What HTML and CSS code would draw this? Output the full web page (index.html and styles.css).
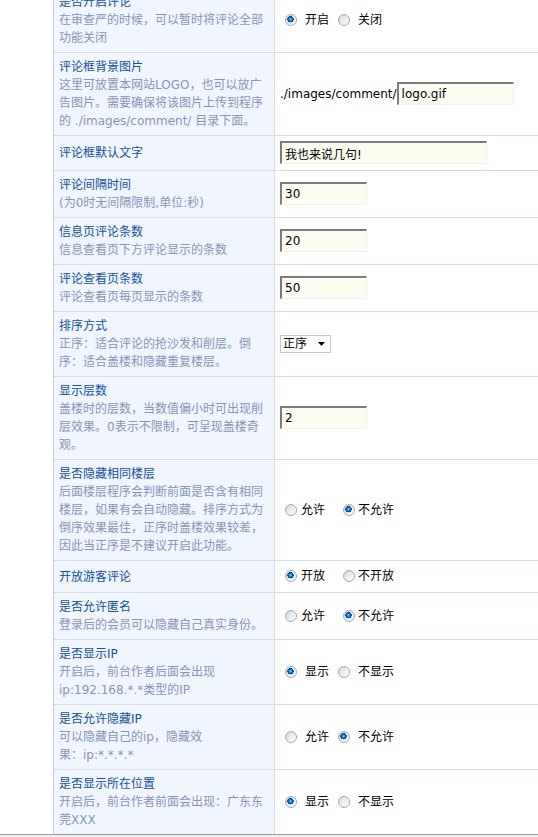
FILE: index.html
```html
<!DOCTYPE html>
<html lang="zh-CN">
<head>
<meta charset="utf-8">
<title>评论设置</title>
<link rel="stylesheet" href="styles.css">
</head>
<body>
<div class="page">
  <table class="cfg">
    <colgroup><col class="c1"><col class="c2"></colgroup>
    <tr>
      <td class="lbl"><div class="t">是否开启评论</div><div class="d">在审查严的时候，可以暂时将评论全部功能关闭</div></td>
      <td class="val"><div class="opts a">
        <label class="opt"><input type="radio" class="rd" name="r1" checked><span>开启</span></label>
        <label class="opt"><input type="radio" class="rd" name="r1"><span>关闭</span></label>
      </div></td>
    </tr>
    <tr>
      <td class="lbl"><div class="t">评论框背景图片</div><div class="d">这里可放置本网站LOGO，也可以放广告图片。需要确保将该图片上传到程序的 ./images/comment/ 目录下面。</div></td>
      <td class="val"><div class="line"><span class="path">./images/comment/</span><input class="txt w-logo" value="logo.gif"></div></td>
    </tr>
    <tr>
      <td class="lbl"><div class="t">评论框默认文字</div></td>
      <td class="val"><div class="line"><input class="txt w-long" value="我也来说几句!"></div></td>
    </tr>
    <tr>
      <td class="lbl"><div class="t">评论间隔时间</div><div class="d">(为0时无间隔限制,单位:秒)</div></td>
      <td class="val"><div class="line"><input class="txt w-num" value="30"></div></td>
    </tr>
    <tr>
      <td class="lbl"><div class="t">信息页评论条数</div><div class="d">信息查看页下方评论显示的条数</div></td>
      <td class="val"><div class="line"><input class="txt w-num" value="20"></div></td>
    </tr>
    <tr>
      <td class="lbl"><div class="t">评论查看页条数</div><div class="d">评论查看页每页显示的条数</div></td>
      <td class="val"><div class="line"><input class="txt w-num" value="50"></div></td>
    </tr>
    <tr>
      <td class="lbl"><div class="t">排序方式</div><div class="d">正序：适合评论的抢沙发和削层。倒序：适合盖楼和隐藏重复楼层。</div></td>
      <td class="val"><div class="line"><span class="sel"><span class="sel-text">正序</span><svg class="sel-arrow" width="7" height="4" viewBox="0 0 7 4"><path d="M0 0H7L3.5 4Z" fill="#000"/></svg></span></div></td>
    </tr>
    <tr>
      <td class="lbl"><div class="t">显示层数</div><div class="d">盖楼时的层数，当数值偏小时可出现削层效果。0表示不限制，可呈现盖楼奇观。</div></td>
      <td class="val"><div class="line"><input class="txt w-num" value="2"></div></td>
    </tr>
    <tr>
      <td class="lbl"><div class="t">是否隐藏相同楼层</div><div class="d">后面楼层程序会判断前面是否含有相同楼层，如果有会自动隐藏。排序方式为倒序效果最佳，正序时盖楼效果较差，因此当正序是不建议开启此功能。</div></td>
      <td class="val"><div class="opts b">
        <label class="opt"><input type="radio" class="rd" name="r2"><span>允许</span></label>
        <label class="opt"><input type="radio" class="rd" name="r2" checked><span>不允许</span></label>
      </div></td>
    </tr>
    <tr>
      <td class="lbl"><div class="t">开放游客评论</div></td>
      <td class="val"><div class="opts b">
        <label class="opt"><input type="radio" class="rd" name="r3" checked><span>开放</span></label>
        <label class="opt"><input type="radio" class="rd" name="r3"><span>不开放</span></label>
      </div></td>
    </tr>
    <tr>
      <td class="lbl"><div class="t">是否允许匿名</div><div class="d">登录后的会员可以隐藏自己真实身份。</div></td>
      <td class="val"><div class="opts b">
        <label class="opt"><input type="radio" class="rd" name="r4"><span>允许</span></label>
        <label class="opt"><input type="radio" class="rd" name="r4" checked><span>不允许</span></label>
      </div></td>
    </tr>
    <tr>
      <td class="lbl"><div class="t">是否显示IP</div><div class="d">开启后，前台作者后面会出现ip:192.168.*.*类型的IP</div></td>
      <td class="val"><div class="opts a">
        <label class="opt"><input type="radio" class="rd" name="r5" checked><span>显示</span></label>
        <label class="opt"><input type="radio" class="rd" name="r5"><span>不显示</span></label>
      </div></td>
    </tr>
    <tr>
      <td class="lbl"><div class="t">是否允许隐藏IP</div><div class="d">可以隐藏自己的ip，隐藏效<br>果：ip:*.*.*.*</div></td>
      <td class="val"><div class="opts a">
        <label class="opt"><input type="radio" class="rd" name="r6"><span>允许</span></label>
        <label class="opt"><input type="radio" class="rd" name="r6" checked><span>不允许</span></label>
      </div></td>
    </tr>
    <tr>
      <td class="lbl"><div class="t">是否显示所在位置</div><div class="d">开启后，前台作者前面会出现：广东东莞XXX</div></td>
      <td class="val"><div class="opts a">
        <label class="opt"><input type="radio" class="rd" name="r7" checked><span>显示</span></label>
        <label class="opt"><input type="radio" class="rd" name="r7"><span>不显示</span></label>
      </div></td>
    </tr>
  </table>
  </div>
  <div class="statusbar"></div>
</body>
</html>
```

FILE: styles.css
```css
* { box-sizing: border-box; }

html, body {
  margin: 0;
  padding: 0;
  background: #ffffff;
}

body {
  font-family: "DejaVu Sans", "Noto Sans CJK SC", sans-serif;
  font-size: 12px;
  line-height: 18px;
  color: #000;
  overflow: hidden;
}

.page {
  padding-left: 53px;
}

.cfg {
  margin-top: -12px;
  width: 485px;
  table-layout: fixed;
  border-collapse: separate;
  border-spacing: 0;
  border-left: 1px solid #c6cfe2;
}

col.c1 { width: 221px; }

.cfg td {
  border-bottom: 1px solid #d6dce8;
}

.cfg tr:last-child td {
  border-bottom: none;
}

.lbl {
  background: #f1f5fd;
  border-right: 1px solid #d6dce8;
  padding: 5px 10px 5px 5px;
  vertical-align: middle;
}

.t {
  color: #11509f;
}

.d {
  color: #8796b8;
}

.val {
  padding: 5px 5px 6px 5px;
  vertical-align: middle;
  background: #ffffff;
}

.line {
  display: flex;
  align-items: center;
}

.path {
  color: #000;
}

.txt {
  height: 23px;
  margin: 0;
  padding: 0 3px;
  border-top: 2px solid #7c7c7c;
  border-left: 2px solid #7c7c7c;
  border-right: 1px solid #f2f2ea;
  border-bottom: 1px solid #f2f2ea;
  background: #fcfcf1;
  font-family: "DejaVu Sans", "Noto Sans CJK SC", sans-serif;
  font-size: 12px;
  color: #000;
  outline: none;
}

.w-logo { width: 117px; }
.w-long { width: 207px; }
.w-num { width: 87px; }

.sel {
  display: inline-flex;
  align-items: center;
  width: 51px;
  height: 18px;
  border: 1px solid #c8c8c8;
  padding-left: 2px;
  background: #fff;
}

.sel-text {
  line-height: 16px;
}

.sel-arrow {
  margin-left: 11px;
}

.opts {
  display: flex;
  align-items: center;
  min-height: 20px;
}

.opt {
  display: flex;
  align-items: center;
}

.rd {
  -webkit-appearance: none;
  appearance: none;
  width: 12px;
  height: 12px;
  margin: 0;
  border: 1px solid #a2abb6;
  border-radius: 50%;
  background: linear-gradient(135deg, #d3d7db 0%, #eef0f1 55%, #ffffff 100%);
  flex: none;
}

.rd:checked {
  background:
    radial-gradient(circle at 45% 42%, #a8e0ff 0, #2a86d0 1.2px, #0d5aa6 2.4px, #083f7a 3px, rgba(8, 63, 122, 0) 3.4px),
    linear-gradient(135deg, #d3d7db 0%, #eef0f1 55%, #ffffff 100%);
}

.opts .opt:first-child .rd { margin-left: 5px; }

.opts.a .opt span { margin-left: 8px; }
.opts.a .opt + .opt { margin-left: 9px; }

.opts.b .opt span { margin-left: 4px; }
.opts.b .opt + .opt { margin-left: 18px; }
.opts.b .opt + .opt span { margin-left: 3px; }

.statusbar {
  height: 20px;
  border-top: 1px solid #9c9c9c;
  background: #efefef;
}
```
